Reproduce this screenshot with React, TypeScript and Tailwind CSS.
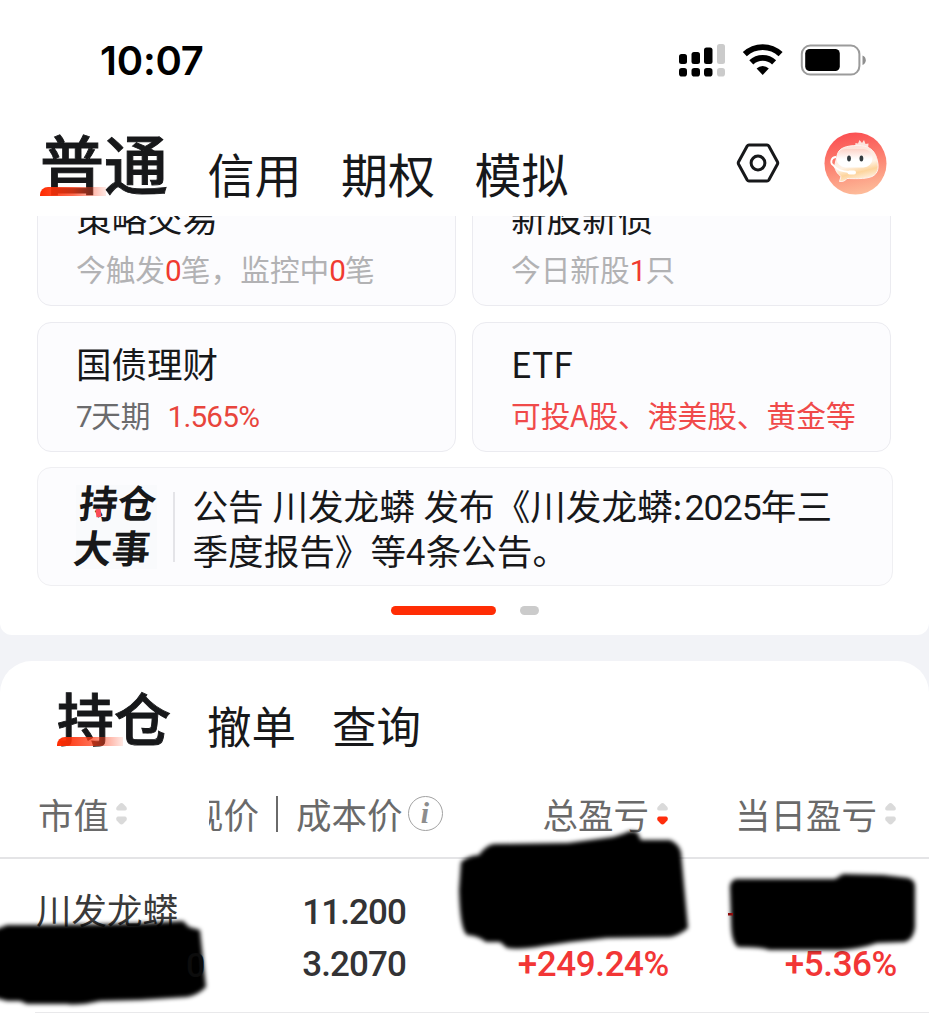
import React, { useState } from "react";

const accountTabs = ["普通", "信用", "期权", "模拟"];
const listTabs = ["持仓", "撤单", "查询"];

const StatusBar: React.FC = () => (
  <div className="flex items-center h-[121px] pl-[100px] pr-[61px]">
    <span className="font-['Inter',sans-serif] text-[40px] font-semibold leading-[40px] tracking-[-0.2px] text-black">
      10:07
    </span>
    <svg
      className="ml-auto -mt-[1px]"
      width="190"
      height="36"
      viewBox="679 42 190 36"
      fill="black"
    >
      <rect x="680" y="54" width="8" height="10" rx="2.5" />
      <rect x="692.5" y="52" width="8.5" height="12" rx="2.5" />
      <rect x="705" y="47.5" width="8.5" height="16.5" rx="2.5" />
      <rect x="718" y="44" width="8" height="20" rx="2.5" fill="#cbcbcb" />
      <rect x="680" y="68" width="8" height="8.5" rx="2.8" />
      <rect x="692.5" y="68" width="8.5" height="8.5" rx="2.8" />
      <rect x="705" y="68" width="8.5" height="8.5" rx="2.8" />
      <rect x="718" y="68" width="8" height="8.5" rx="2.8" fill="#cbcbcb" />
      <g fill="none" stroke="black" strokeWidth="5.8">
        <path d="M745.8 54.2a26 26 0 0 1 35.8 0" />
        <path d="M752.3 62.4a16.5 16.5 0 0 1 22.8 0" />
      </g>
      <path d="M757.6 68.6a8.6 8.6 0 0 1 12.2 0L763.7 75z" />
      <rect x="802.8" y="45.6" width="57.6" height="29" rx="8.5" fill="none" stroke="#9b9b9b" strokeWidth="2" />
      <rect x="806.2" y="49" width="34.6" height="22" rx="4.5" />
      <path d="M863.5 55.5q3.3 1.3 3.3 4.7t-3.3 4.7z" fill="#8f8f8f" />
    </svg>
  </div>
);

const SettingsIcon: React.FC = () => (
  <svg width="44" height="42" viewBox="0 0 44 42" fill="none" stroke="#17181a" strokeWidth="3">
    <path d="M13 3h18q1.200 0 1.800 1l8.600 15.700q.7 1.300 0 2.600L32.800 38q-.6 1-1.800 1H13q-1.200 0-1.800-1L2.600 22.300q-.7-1.300 0-2.600L11.200 4q.6-1 1.800-1z" />
    <circle cx="22" cy="21" r="6.9" />
  </svg>
);

const Avatar: React.FC = () => (
  <svg width="63" height="63" viewBox="0 0 63 63">
    <defs>
      <linearGradient id="avatarBg" x1="0.4" y1="0" x2="0.6" y2="1">
        <stop offset="0" stopColor="#fb4f52" />
        <stop offset="0.55" stopColor="#fc8a76" />
        <stop offset="1" stopColor="#fdbd9b" />
      </linearGradient>
      <linearGradient id="avatarBody" x1="0.3" y1="0" x2="0.6" y2="1">
        <stop offset="0" stopColor="#fde0d8" />
        <stop offset="0.55" stopColor="#fff3e6" />
        <stop offset="0.75" stopColor="#fdd49c" />
        <stop offset="1" stopColor="#fff4ea" />
      </linearGradient>
      <linearGradient id="avatarFace" x1="0" y1="0" x2="0" y2="1">
        <stop offset="0" stopColor="#fdd3c8" />
        <stop offset="0.55" stopColor="#fff" />
      </linearGradient>
    </defs>
    <circle cx="31.5" cy="31.5" r="31" fill="url(#avatarBg)" />
    <path d="M31 15l.5-4 2.500.5 1.500-3.500 2.500 3 2-3 1.500 4 3-.5-.5 6z" fill="#fde3dd" />
    <path
      d="M13 24C14 16 22 13.500 34 13.500c10 0 16 4 18.500 12 3 9 2 16-4.500 19-7 3-20 2-25 2-1.500 2-4 3.500-7.500 3l1.500-5c-4-3-5.500-6-6.500-10z"
      fill="url(#avatarBody)"
      stroke="#fff2ee"
      strokeWidth="1"
    />
    <rect x="12.500" y="17" width="36" height="18.500" rx="9" fill="url(#avatarFace)" />
    <path
      d="M12 25c-5 0-6 6-3 8 3 4 8 6.500 16 7"
      fill="none"
      stroke="#fff"
      strokeWidth="1.800"
    />
    <rect x="23.500" y="38.500" width="8.500" height="4" rx="2" fill="#fff" />
    <ellipse cx="25" cy="26.500" rx="1.900" ry="3" fill="#333b3f" />
    <ellipse cx="37.400" cy="26.500" rx="1.900" ry="3" fill="#333b3f" />
  </svg>
);

const Underline: React.FC = () => (
  <span className="absolute left-0 bottom-0 w-[66px] h-[9px] rounded-tl-[8px] bg-linear-to-r from-[#ff2a00] via-[#ff3a14]/75 to-[#ff6a4a]/15" />
);

interface CardProps {
  title: string;
  className?: string;
  children: React.ReactNode;
}

const Card: React.FC<CardProps> = ({ title, className = "", children }) => (
  <div
    className={`w-[419px] h-[130px] shrink-0 rounded-[14px] border-[1.5px] border-[#ebebf0] bg-[#fcfcfe] pl-[38px] pt-[22px] ${className}`}
  >
    <div className="text-[35.5px] leading-[36px] text-[#17181a]">{title}</div>
    <div className="mt-[19px] text-[29.7px] leading-[30px] whitespace-nowrap">
      {children}
    </div>
  </div>
);

const Num: React.FC<{ children: React.ReactNode }> = ({ children }) => (
  <span className="font-['Roboto',sans-serif] tracking-[-0.9px] text-[#f03a30]">
    {children}
  </span>
);

const SortIcon: React.FC<{ active?: boolean }> = ({ active = false }) => (
  <svg width="13" height="24" viewBox="0 0 13 24">
    <path d="M6.500 1q1 0 2 1l2.800 3q1.500 2.500-1 3.500H2.700q-2.500-1-1-3.500l2.800-3q1-1 2-1z" fill="#dadada" />
    <path
      d="M6.500 22.500q1 0 2-1l2.800-3q1.500-2.500-1-4H2.700q-2.500 1.500-1 4l2.800 3q1 1 2 1z"
      fill={active ? "#ff2d0c" : "#dadada"}
    />
  </svg>
);

const InfoIcon: React.FC = () => (
  <span className="ml-[5px] -mt-[2px] flex h-[35px] w-[35px] shrink-0 items-center justify-center rounded-full border-[1.5px] border-[#a2a2a2] font-['Liberation_Serif',serif] text-[30px] font-bold italic leading-none text-[#8d8d8d]">
    i
  </span>
);

const HeaderCells: React.FC = () => (
  <div className="-mt-[14px] flex w-full items-start pl-[38px] pr-[32px]">
    <div className="flex h-[36px] w-[171px] items-center gap-[6px]">
      市值
      <SortIcon />
    </div>
    <div className="flex h-[36px] w-[236px] items-center">
      <span className="flex w-[50px] justify-end overflow-hidden whitespace-nowrap">
        现价
      </span>
      <span className="ml-[17px] mr-[18px] h-[36px] w-[2px] bg-[#6a6a6a]" />
      成本价
      <InfoIcon />
    </div>
    <div className="flex h-[36px] w-[224px] items-center justify-end gap-[7px]">
      总盈亏
      <SortIcon active />
    </div>
    <div className="ml-auto flex h-[36px] items-center gap-[7px]">
      当日盈亏
      <SortIcon />
    </div>
  </div>
);

interface ValuesProps {
  top?: string;
  bottom: string;
  className?: string;
}

const Values: React.FC<ValuesProps> = ({ top, bottom, className = "" }) => (
  <div
    className={`flex h-[153px] flex-col pt-[37px] text-right font-['Roboto',sans-serif] text-[35px] font-medium leading-[34px] ${className}`}
  >
    <div className="h-[34px]">{top}</div>
    <div className="mt-[18px]">{bottom}</div>
  </div>
);

// Brush strokes that hide the private amounts
const Redactions: React.FC = () => (
  <svg
    className="absolute left-0 top-0 pointer-events-none"
    width="929"
    height="214"
    viewBox="0 810 929 214"
  >
    <defs>
      <filter id="brush" x="-5%" y="-10%" width="110%" height="120%">
        <feGaussianBlur stdDeviation="2.2" />
      </filter>
    </defs>
    <g filter="url(#brush)" strokeLinejoin="round">
      <path d="M-8 931L7 925Q75 925 147 923L183 921 189 927 200 930Q203 958 206 987 198 995 187 997L140 1000 100 1001Q78 1006 67 1004H27L20 1001 7 1001-8 997z" />
      <path d="M461 862Q468 856 479 855 486 845 494 844L568 843 613 837Q624 834 630 831L637 832 641 840H670Q679 844 681 852L688 928Q680 935 670 937L607 938Q575 941 543 946 520 950 507 948L500 942 486 942Q479 936 467 935 460 930 459 890z" />
      <path d="M730 890Q729 881 736 879H835L843 874 883 875 908 878Q915 880 915 886V927Q914 939 905 942L877 943Q860 949 840 950H769Q763 947 738 947 731 943 731 920z" />
    </g>
    <rect x="728" y="913" width="5" height="2.500" fill="#8d0b0b" />
  </svg>
);

const App: React.FC = () => {
  const [account, setAccount] = useState("普通");
  const [list, setList] = useState("持仓");

  return (
    <div className="w-[929px] h-[1024px] overflow-hidden bg-[#f2f3f7] font-['Noto_Sans_CJK_SC',sans-serif] text-[#17181a]">
      <div className="h-[635px] overflow-hidden rounded-b-[12px] bg-white">
        <StatusBar />
        <div className="flex h-[95px] pl-[40px] pr-[42px]">
          <div className="flex h-[75px] items-end gap-[39.5px]">
            {accountTabs.map((tab) => (
              <button
                key={tab}
                onClick={() => setAccount(tab)}
                className={
                  tab === account
                    ? "relative flex h-[65px] items-start text-[64px] leading-[60px] font-medium [-webkit-text-stroke:0.9px_#17181a]"
                    : "h-[47px] text-[47px] leading-[47px]"
                }
              >
                {tab}
                {tab === account && <Underline />}
              </button>
            ))}
          </div>
          <div className="ml-auto flex h-[84px] items-center gap-[44px]">
            <SettingsIcon />
            <Avatar />
          </div>
        </div>

        <div className="flex h-[370px] flex-col overflow-hidden pl-[37px]">
          <div className="-mt-[40px] flex gap-4">
            <Card title="策略交易" className="text-[#b2b2b4]">
              今触发<Num>0</Num>笔，监控中<Num>0</Num>笔
            </Card>
            <Card title="新股新债" className="text-[#b2b2b4]">
              今日新股<Num>1</Num>只
            </Card>
          </div>
          <div className="mt-4 flex gap-4">
            <Card title="国债理财" className="text-[#6b6b6d]">
              <span className="font-['Roboto',sans-serif] tracking-[-1.5px]">7</span>天期
              <span className="ml-[17px] font-['Roboto',sans-serif] tracking-[-0.8px] text-[#e8453c]">
                1.565%
              </span>
            </Card>
            <Card title="ETF" className="text-[#f04a4a]">
              可投A股、港美股、黄金等
            </Card>
          </div>
          <div className="mt-[15px] flex h-[119px] w-[856px] shrink-0 items-center rounded-[14px] border-[1.5px] border-[#efeff2] bg-[#fcfcfe] pl-[38px]">
            <div className="relative h-[84px] w-[81px] bg-[#f9fafc] text-[38.5px] font-bold leading-[45px]">
              <div className="-skew-x-6 -mt-[6px] whitespace-nowrap">
                <div className="ml-[1px]">持仓</div>
                <div>大事</div>
              </div>
              <span className="absolute left-[20px] top-[24px] h-[8px] w-[5px] -rotate-6 bg-[#fb4a55]" />
            </div>
            <div className="ml-[16px] h-[70px] w-[1.5px] bg-[#e4e4e8]" />
            <div className="ml-[18px] whitespace-nowrap text-[35.6px] leading-[45.5px]">
              <div className="h-[45px] [word-spacing:0.8px]">
                公告 川发龙蟒 发布《川发龙蟒:
                <span className="ml-[2px] font-['Roboto',sans-serif] leading-none tracking-[-0.9px]">
                  2025
                </span>
                年三
              </div>
              <div className="h-[45px]">季度报告》等4条公告。</div>
            </div>
          </div>
        </div>

        <div className="flex h-[49px] justify-center gap-6 pt-[20px]">
          <span className="h-[9px] w-[105px] rounded-full bg-[#ff2d05]" />
          <span className="h-[9px] w-[19px] rounded-full bg-[#cbcbcb]" />
        </div>
      </div>

      <div className="mt-[26px] h-[363px] rounded-t-[32px] bg-white">
        <div className="flex h-[85px] items-end gap-[36px] pl-[57px]">
          {listTabs.map((tab) => (
            <button
              key={tab}
              onClick={() => setList(tab)}
              className={
                tab === list
                  ? "relative flex h-[58px] items-start text-[57px] leading-[56px] font-medium [-webkit-text-stroke:0.9px_#17181a]"
                  : "h-[43px] text-[44.5px] leading-[43px]"
              }
            >
              {tab}
              {tab === list && <Underline />}
            </button>
          ))}
        </div>

        <div className="relative mt-[64px]">
          <div className="flex h-[49px] border-b-[2px] border-[#e4e4e6] text-[35.5px] leading-[36px] text-[#6a6a6a]">
            <HeaderCells />
          </div>
          <div className="flex pl-[36px] pr-[32px]">
            <div className="w-[192px] pt-[32px] text-[35.5px] leading-[36px] text-[#3a3a3a]">
              川发龙蟒
            </div>
            <Values
              top="11.200"
              bottom="3.2070"
              className="w-[178px] tracking-[-0.9px] text-[#333335]"
            />
            <Values
              bottom="+249.24%"
              className="w-[263px] tracking-[-0.4px] text-[#f23636]"
            />
            <Values
              bottom="+5.36%"
              className="ml-auto tracking-[-0.4px] text-[#f23636]"
            />
          </div>
          <div className="absolute left-[35px] right-0 top-[202px] h-px bg-[#e9e9eb]" />
          <Redactions />
          <span className="absolute left-[186px] top-[138px] font-['Roboto',sans-serif] text-[34px] font-medium leading-[34px] text-[#0c0c0c]">
            0
          </span>
        </div>
      </div>
    </div>
  );
};

export default App;
